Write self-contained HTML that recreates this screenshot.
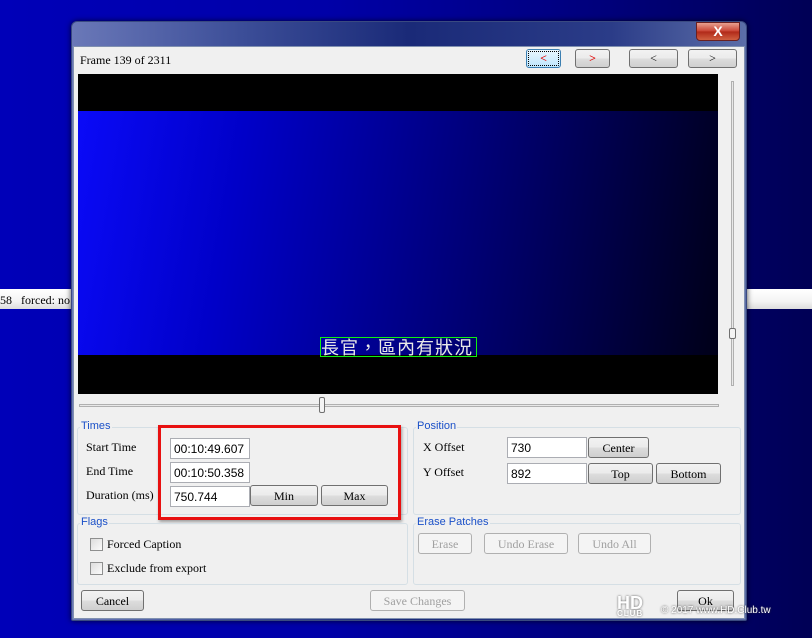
<!DOCTYPE html>
<html><head><meta charset="utf-8"><style>
*{margin:0;padding:0;box-sizing:border-box}
body{width:812px;height:638px;overflow:hidden;position:relative;background:linear-gradient(90deg,#0000b8 0%,#0000a8 40%,#00007a 75%,#000055 100%);font-family:"Liberation Serif",serif;font-size:12px;color:#000}
.a{position:absolute}
.strip{background:linear-gradient(#fff,#f4f4f4 60%,#dcdcdc);}
.win{left:71px;top:21px;width:676px;height:600px;border:1px solid #3a4a80;border-radius:6px 6px 2px 2px;background:linear-gradient(90deg,#6a78b8 0%,#3c4e98 25%,#1a2a78 50%,#2b3c88 80%,#5c6ea8 100%);box-shadow:0 0 6px rgba(0,0,0,.7)}
.cont{left:73px;top:46px;width:672px;height:573px;background:#f0f0f0;border:1px solid #8090b0}
.btn{position:absolute;border:1px solid #707070;border-radius:3px;background:linear-gradient(#f2f2f2 0%,#ebebeb 50%,#dddddd 51%,#cfcfcf 100%);text-align:center;font-size:12px;line-height:20px}
.dis{color:#a0a0a0;border-color:#b0b0b0;background:#f4f4f4}
.inp{position:absolute;background:#fff;border:1px solid #abadb3;font-family:"Liberation Sans",sans-serif;font-size:12px;padding-left:3px;line-height:20px}
.grp{position:absolute;border:1px solid #d5dfe5;border-radius:3px}
.gl{position:absolute;top:-8px;left:2px;background:#f0f0f0;color:#1a50c8;font-family:"Liberation Sans",sans-serif;font-size:11px;padding:0 1px}
.lbl{position:absolute;font-size:12px}
.cb{position:absolute;width:13px;height:13px;border:1px solid #8e8f8f;background:linear-gradient(135deg,#ddd,#fbfbfb)}
</style></head><body>
<div class="a strip" style="left:0;top:289px;width:72px;height:20px"></div>
<div class="a" style="left:0;top:293px;font-size:12px">58&nbsp;&nbsp;&nbsp;forced: no</div>
<div class="a strip" style="left:746px;top:289px;width:66px;height:20px"></div>
<div class="a win"></div>
<div class="a" style="left:696px;top:22px;width:44px;height:19px;border:1px solid #6a2020;border-radius:0 0 4px 4px;background:linear-gradient(#e8a090,#c84030 50%,#b02818 51%,#d06040);color:#fff;font-family:'Liberation Sans',sans-serif;font-weight:bold;font-size:14px;text-align:center;line-height:17px">X</div>
<div class="a cont"></div>
<div class="lbl" style="left:80px;top:53px">Frame 139 of 2311</div>
<div class="btn" style="left:526px;top:49px;width:35px;height:19px;border-color:#3c7fb1;background:linear-gradient(#eaf6fd,#bee6fd);color:#e00000;font-weight:bold;line-height:17px;outline:1px dotted #000;outline-offset:-3px">&lt;</div>
<div class="btn" style="left:575px;top:49px;width:35px;height:19px;color:#e00000;font-weight:bold;line-height:17px">&gt;</div>
<div class="btn" style="left:629px;top:49px;width:49px;height:19px;line-height:17px">&lt;</div>
<div class="btn" style="left:688px;top:49px;width:49px;height:19px;line-height:17px">&gt;</div>
<div class="a" style="left:78px;top:74px;width:640px;height:320px;background:#000"></div>
<div class="a" style="left:78px;top:111px;width:640px;height:244px;background:linear-gradient(100deg,#0a0af8 0%,#0000c8 25%,#00009a 45%,#000060 70%,#000018 100%)"></div>
<div class="a" style="left:320px;top:337px;width:157px;height:20px;border:1px solid #10f010;color:#e8e8e8;font-family:'WenQuanYi Zen Hei','Noto Sans CJK TC',sans-serif;font-size:18px;line-height:18px;white-space:nowrap;letter-spacing:1px;overflow:hidden">長官，區內有狀況</div>
<div class="a" style="left:731px;top:81px;width:3px;height:305px;border:1px solid #b0b0b0;background:#e8e8e8"></div>
<div class="a" style="left:729px;top:328px;width:7px;height:11px;border:1px solid #707070;border-radius:2px;background:#f4f4f4"></div>
<div class="a" style="left:79px;top:404px;width:640px;height:3px;border:1px solid #b0b0b0;background:#e8e8e8"></div>
<div class="a" style="left:319px;top:397px;width:6px;height:16px;border:1px solid #707070;border-radius:2px;background:#f4f4f4"></div>
<div class="grp" style="left:77px;top:427px;width:331px;height:88px"><span class="gl">Times</span></div>
<div class="lbl" style="left:86px;top:440px">Start Time</div>
<div class="lbl" style="left:86px;top:464px">End Time</div>
<div class="lbl" style="left:86px;top:488px">Duration (ms)</div>
<div class="inp" style="left:170px;top:438px;width:80px;height:21px">00:10:49.607</div>
<div class="inp" style="left:170px;top:462px;width:80px;height:21px">00:10:50.358</div>
<div class="inp" style="left:170px;top:486px;width:80px;height:21px">750.744</div>
<div class="btn" style="left:250px;top:485px;width:68px;height:21px">Min</div>
<div class="btn" style="left:321px;top:485px;width:67px;height:21px">Max</div>
<div class="a" style="left:158px;top:425px;width:243px;height:95px;border:3px solid #e81010;box-shadow:1px 2px 3px rgba(0,0,0,.35)"></div>
<div class="grp" style="left:413px;top:427px;width:328px;height:88px"><span class="gl">Position</span></div>
<div class="lbl" style="left:423px;top:440px">X Offset</div>
<div class="lbl" style="left:423px;top:465px">Y Offset</div>
<div class="inp" style="left:507px;top:437px;width:80px;height:21px">730</div>
<div class="inp" style="left:507px;top:463px;width:80px;height:21px">892</div>
<div class="btn" style="left:588px;top:437px;width:61px;height:21px">Center</div>
<div class="btn" style="left:588px;top:463px;width:65px;height:21px">Top</div>
<div class="btn" style="left:656px;top:463px;width:65px;height:21px">Bottom</div>
<div class="grp" style="left:77px;top:523px;width:331px;height:62px"><span class="gl">Flags</span></div>
<div class="cb" style="left:90px;top:538px"></div><div class="lbl" style="left:107px;top:537px">Forced Caption</div>
<div class="cb" style="left:90px;top:562px"></div><div class="lbl" style="left:107px;top:561px">Exclude from export</div>
<div class="grp" style="left:413px;top:523px;width:328px;height:62px"><span class="gl">Erase Patches</span></div>
<div class="btn dis" style="left:418px;top:533px;width:54px;height:21px">Erase</div>
<div class="btn dis" style="left:484px;top:533px;width:84px;height:21px">Undo Erase</div>
<div class="btn dis" style="left:578px;top:533px;width:73px;height:21px">Undo All</div>
<div class="btn" style="left:81px;top:590px;width:63px;height:21px">Cancel</div>
<div class="btn dis" style="left:370px;top:590px;width:95px;height:21px">Save Changes</div>
<div class="btn" style="left:677px;top:590px;width:57px;height:21px">Ok</div>
<div class="a" style="left:617px;top:596px;color:#fff;font-family:'Liberation Sans',sans-serif;font-weight:bold;font-size:18px;line-height:14px;text-shadow:0 0 2px #555">HD<div style="font-size:8px;line-height:8px;letter-spacing:1px">CLUB</div></div>
<div class="a" style="left:661px;top:605px;color:#fff;font-family:'Liberation Sans',sans-serif;font-size:10px;white-space:nowrap;text-shadow:0 0 2px #333">© 2017 www.HD.Club.tw</div>
</body></html>
